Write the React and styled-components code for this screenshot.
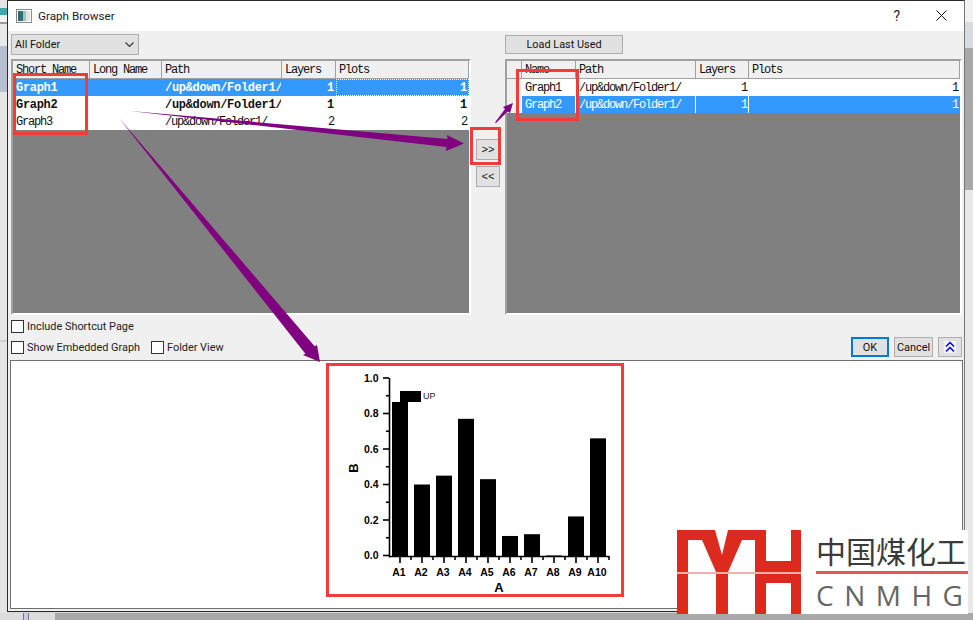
import React from 'react';
import styled, { createGlobalStyle } from 'styled-components';

const GlobalStyle = createGlobalStyle`
  html, body { margin: 0; padding: 0; background: #d8d8d8; }
  * { box-sizing: border-box; }
`;

const Page = styled.div`
  position: relative;
  width: 973px;
  height: 620px;
  overflow: hidden;
  display: flex;
  flex-direction: column;
  font-family: Roboto, "Liberation Sans", sans-serif;
  color: #111;
`;

const Desk = styled.div`
  display: flex;
  height: 613px;
`;

const LeftStrip = styled.div`
  width: 7px;
  background: linear-gradient(
    to bottom,
    #e4e4e4 0 8px, #3fa7a8 8px 15px, #f2f2f2 15px 22px, #9a9a9a 22px 24px,
    #e9e9e9 24px 46px, #b5bfcd 46px 92px, #e6e6e6 92px 340px, #cfcfcf 340px 342px, #e4e4e4 342px
  );
`;

const RightStrip = styled.div`
  flex: 1;
  background: linear-gradient(
    to bottom,
    #f2f2f2 0 22px, #d9dde2 22px 48px, #a8a8a8 48px 190px, #e8e8e8 190px
  );
`;

const BottomStrip = styled.div`
  flex: 1;
  display: flex;
  background: #a9a9a9;
`;

const BottomLeft = styled.div`
  width: 55px;
  padding-left: 23px;
  background: #dcdcdc;
`;

const Splitter = styled.div`
  width: 6px;
  height: 100%;
  background: #c8c8e6;
  border-left: 1px solid #777;
  border-right: 1px solid #777;
`;

const Window = styled.div`
  width: 958px;
  height: 612px;
  display: flex;
  flex-direction: column;
  background: #f0f0f0;
  border: 1px solid #2a2a2a;
  border-right-color: #777;
`;

const TitleBar = styled.div`
  height: 30px;
  flex: none;
  display: flex;
  align-items: center;
  padding: 0 17px 1px 8px;
  background: #fff;
  font-size: 11.7px;
`;

const TitleText = styled.span`
  margin-left: 6px;
  flex: 1;
  color: #222;
`;

const HelpMark = styled.span`
  font-size: 14px;
  margin-right: 36px;
  color: #222;
`;

const Client = styled.div`
  flex: 1;
  display: flex;
  flex-direction: column;
  padding: 3px 2px 2px 3px;
`;

const TopRow = styled.div`
  display: grid;
  grid-template-columns: 460px 34px 1fr;
  height: 281px;
  flex: none;
`;

const Column = styled.div`
  display: flex;
  flex-direction: column;
`;

const Select = styled.div`
  width: 128px;
  height: 21px;
  margin-bottom: 4px;
  padding: 0 4px 0 3px;
  display: flex;
  align-items: center;
  justify-content: space-between;
  background: #e1e1e1;
  border: 1px solid #adadad;
  font-size: 10.8px;
`;

const Button = styled.div`
  width: ${p => p.$w}px;
  height: ${p => p.$h || 21}px;
  flex: none;
  display: flex;
  align-items: center;
  justify-content: center;
  background: #e1e1e1;
  border: ${p => (p.$focus ? '2px solid #0078d7' : '1px solid #adadad')};
  font-size: 10.9px;
  color: #111;
`;

const LoadButton = styled(Button)`
  margin: 1px 0 5px;
`;

const Mover = styled.div`
  display: flex;
  flex-direction: column;
  align-items: center;
  gap: 6px;
  padding-top: 105px;
`;

const MoverButton = styled(Button)`
  font-family: "Liberation Mono", monospace;
  font-size: 11px;
`;

const Panel = styled.div`
  height: 256px;
  display: flex;
  flex-direction: column;
  background: #808080;
  border: 2px solid;
  border-color: #a0a0a0 #fff #fff #a0a0a0;
  font-family: "Liberation Mono", "DejaVu Sans Mono", monospace;
  font-size: 12px;
`;

const Row = styled.div`
  display: grid;
  grid-template-columns: ${p => p.$cols};
  height: ${p => (p.$head ? 18 : 17)}px;
  background: ${p => (p.$selected ? '#3399ff' : p.$head ? '#f0f0f0' : '#fff')};
  color: ${p => (p.$selected ? '#fff' : '#111')};
  font-weight: ${p => (p.$bold ? 700 : 400)};
  letter-spacing: ${p => (p.$bold ? '-0.3px' : '-1.2px')};
`;

const Cell = styled.div`
  display: flex;
  align-items: center;
  overflow: hidden;
  white-space: nowrap;
  padding: 0 ${p => (p.$num ? 1 : 2)}px 0 ${p => (p.$num ? 2 : 3)}px;
  justify-content: ${p => (p.$num ? 'flex-end' : 'flex-start')};
  border-right: 1px solid ${p => (p.$head ? '#a0a0a0' : p.$divider ? '#fff' : 'transparent')};
  border-bottom: ${p => (p.$head ? '1px solid #a0a0a0' : 'none')};
  outline: ${p => (p.$focus ? '1px dotted #fff' : 'none')};
  outline-offset: -1px;
  background: ${p => (p.$gutter ? '#f0f0f0' : 'transparent')};
`;

const Options = styled.div`
  flex: 1;
  display: flex;
  flex-direction: column;
  gap: 4px;
  padding-top: 4px;
`;

const OptionRow = styled.div`
  display: flex;
  align-items: center;
  height: 14px;
  gap: 11px;
`;

const WideRow = styled(OptionRow)`
  height: 20px;
`;

const CheckLabel = styled.label`
  display: flex;
  align-items: center;
  gap: 3px;
  font-size: 10.9px;
  color: #222;
  white-space: nowrap;
`;

const Box = styled.span`
  width: 13px;
  height: 13px;
  flex: none;
  background: #fff;
  border: 1px solid #333;
`;

const Actions = styled.div`
  margin-left: auto;
  display: flex;
  gap: 5px;
`;

const Preview = styled.div`
  height: 249px;
  flex: none;
  margin: 0 -1px;
  padding: 3px 0 0 316px;
  background: #fff;
  border: 1px solid #6e6e6e;
`;

const RedBox = styled.div`
  position: absolute;
  left: ${p => p.$x}px;
  top: ${p => p.$y}px;
  width: ${p => p.$w}px;
  height: ${p => p.$h}px;
  border: 3px solid #f43b3b;
`;

const ArrowLayer = styled.svg`
  position: absolute;
  left: 0;
  top: 0;
`;

const Logo = styled.div`
  position: absolute;
  left: 677px;
  top: 530px;
  width: 291px;
  height: 84px;
  display: flex;
  background: #fff;
`;

const LogoText = styled.div`
  margin-left: 15px;
  width: 152px;
  flex: none;
  display: flex;
  flex-direction: column;
`;

const LogoCn = styled.div`
  height: 41px;
  font-family: "Noto Sans CJK SC", sans-serif;
  font-size: 30px;
  line-height: 41px;
  color: #3a3a3a;
  white-space: nowrap;
`;

const LogoRule = styled.div`
  height: 3px;
  background: #e8554d;
`;

const LogoEn = styled.div`
  margin-top: 3px;
  font-family: "Open Sans", sans-serif;
  font-size: 28px;
  line-height: 36px;
  letter-spacing: 10.5px;
  color: #666;
  white-space: nowrap;
`;

const LogoLast = styled.span`
  letter-spacing: 0;
`;

const LEFT_COLS = '77px 72px 120px 54px 1fr';
const RIGHT_COLS = '15px 54px 120px 53px 1fr';

const leftRows = [
  { name: 'Graph1', layers: 1, plots: 1, bold: true, selected: true },
  { name: 'Graph2', layers: 1, plots: 1, bold: true },
  { name: 'Graph3', layers: 2, plots: 2 },
];

const rightRows = [
  { name: 'Graph1', selected: false },
  { name: 'Graph2', selected: true },
];

const bars = [0.865, 0.4, 0.45, 0.77, 0.43, 0.11, 0.12, 0, 0.22, 0.66];

// chart coordinates are local to the red frame
const Chart = () => {
  const yOf = v => 191.5 - 177.5 * v;
  const labelFont = '"Liberation Sans", sans-serif';
  return (
    <svg width="296" height="240" viewBox="0 0 296 240" style={{ display: 'block' }}>
      {bars.map((v, i) => (
        <rect key={i} x={65 + i * 22} y={yOf(v)} width="16" height={192 - yOf(v)} fill="#000" />
      ))}
      <rect x="73" y="27" width="21" height="11" fill="#000" />
      <text x="96" y="35" fontSize="9" fontFamily={labelFont} fill="#222">UP</text>
      <path d="M62.5 14V193.5M62 192.5H282" stroke="#000" strokeWidth="1.6" fill="none" />
      {[0, 0.2, 0.4, 0.6, 0.8, 1].map(v => (
        <g key={v}>
          <line x1="56" x2="62" y1={yOf(v)} y2={yOf(v)} stroke="#000" strokeWidth="1.6" />
          <text x="51.5" y={yOf(v) + 3.5} textAnchor="end" fontSize="10.5" fontWeight="700" fontFamily={labelFont}>
            {v.toFixed(1)}
          </text>
        </g>
      ))}
      {[0.1, 0.3, 0.5, 0.7, 0.9].map(v => (
        <line key={v} x1="59" x2="62" y1={yOf(v)} y2={yOf(v)} stroke="#000" strokeWidth="1.6" />
      ))}
      {bars.map((_, i) => (
        <g key={i}>
          <line x1={73 + i * 22} x2={73 + i * 22} y1="192" y2="199" stroke="#000" strokeWidth="1.6" />
          <line x1={84 + i * 22} x2={84 + i * 22} y1="192" y2="196" stroke="#000" strokeWidth="1.6" />
          <text x={72 + i * 22} y="212" textAnchor="middle" fontSize="10.5" fontWeight="700" fontFamily={labelFont}>
            {`A${i + 1}`}
          </text>
        </g>
      ))}
      <text x="172" y="227.5" textAnchor="middle" fontSize="13" fontWeight="700" fontFamily={labelFont}>A</text>
      <text
        transform="translate(31 104) rotate(-90)"
        textAnchor="middle"
        fontSize="13"
        fontWeight="700"
        fontFamily={labelFont}
      >
        B
      </text>
    </svg>
  );
};

const WindowIcon = () => (
  <svg width="16" height="14" viewBox="0 0 16 14">
    <rect x="0.5" y="0.5" width="15" height="13" fill="#fff" stroke="#8a8a8a" />
    <rect x="2" y="2" width="5" height="10" fill="#2f6f78" />
    <rect x="7" y="2" width="3" height="10" fill="#9cc7c4" />
    <rect x="10" y="2" width="4" height="10" fill="#e4e4e4" />
  </svg>
);

const CloseIcon = () => (
  <svg width="11" height="11" viewBox="0 0 11 11">
    <path d="M0.5 0.5L10.5 10.5M10.5 0.5L0.5 10.5" stroke="#111" strokeWidth="1" fill="none" />
  </svg>
);

const ChevronDown = () => (
  <svg width="9" height="6" viewBox="0 0 9 6">
    <path d="M0.5 0.5L4.5 4.5L8.5 0.5" stroke="#333" strokeWidth="1.1" fill="none" />
  </svg>
);

const DoubleUp = () => (
  <svg width="12" height="12" viewBox="0 0 12 12" style={{ background: '#f3f3ff' }}>
    <path d="M2 5.5L6 1.5L10 5.5M2 10.5L6 6.5L10 10.5" stroke="#0000ee" strokeWidth="1.5" fill="none" />
  </svg>
);

const Arrows = () => (
  <ArrowLayer width="973" height="620" viewBox="0 0 973 620">
    <g fill="#800080">
      <polygon points="130,111 447.5,139 447,135 464,143.5 446,151 446.5,147" />
      <polygon points="119,118 314.6,346.2 317,345 320,362 303,355 305.4,353.8" />
      <polygon points="495,122.5 505,109 503,107 513,103 510,113 507.5,111.5 496,123" />
    </g>
  </ArrowLayer>
);

const App = () => (
  <Page>
    <GlobalStyle />
    <Desk>
      <LeftStrip />
      <Window>
        <TitleBar>
          <WindowIcon />
          <TitleText>Graph Browser</TitleText>
          <HelpMark>?</HelpMark>
          <CloseIcon />
        </TitleBar>
        <Client>
          <TopRow>
            <Column>
              <Select>
                All Folder
                <ChevronDown />
              </Select>
              <Panel>
                <Row $cols={LEFT_COLS} $head>
                  {['Short Name', 'Long Name', 'Path', 'Layers', 'Plots'].map(h => (
                    <Cell key={h} $head>{h}</Cell>
                  ))}
                </Row>
                {leftRows.map(r => (
                  <Row key={r.name} $cols={LEFT_COLS} $bold={r.bold} $selected={r.selected}>
                    <Cell>{r.name}</Cell>
                    <Cell />
                    <Cell>/up&amp;down/Folder1/</Cell>
                    <Cell $num>{r.layers}</Cell>
                    <Cell $num $focus={r.selected}>{r.plots}</Cell>
                  </Row>
                ))}
              </Panel>
            </Column>
            <Mover>
              <MoverButton $w={24}>&gt;&gt;</MoverButton>
              <MoverButton $w={24}>&lt;&lt;</MoverButton>
            </Mover>
            <Column>
              <LoadButton $w={118} $h={19}>Load Last Used</LoadButton>
              <Panel>
                <Row $cols={RIGHT_COLS} $head>
                  {['', 'Name', 'Path', 'Layers', 'Plots'].map(h => (
                    <Cell key={h} $head>{h}</Cell>
                  ))}
                </Row>
                {rightRows.map(r => (
                  <Row key={r.name} $cols={RIGHT_COLS} $selected={r.selected}>
                    <Cell $gutter $divider />
                    <Cell $divider>{r.name}</Cell>
                    <Cell $divider>/up&amp;down/Folder1/</Cell>
                    <Cell $num $divider>1</Cell>
                    <Cell $num>1</Cell>
                  </Row>
                ))}
              </Panel>
            </Column>
          </TopRow>
          <Options>
            <OptionRow>
              <CheckLabel><Box />Include Shortcut Page</CheckLabel>
            </OptionRow>
            <WideRow>
              <CheckLabel><Box />Show Embedded Graph</CheckLabel>
              <CheckLabel><Box />Folder View</CheckLabel>
              <Actions>
                <Button $w={38} $h={20} $focus>OK</Button>
                <Button $w={39} $h={20}>Cancel</Button>
                <Button $w={24} $h={20}><DoubleUp /></Button>
              </Actions>
            </WideRow>
          </Options>
          <Preview>
            <Chart />
          </Preview>
        </Client>
      </Window>
      <RightStrip />
    </Desk>
    <BottomStrip>
      <BottomLeft>
        <Splitter />
      </BottomLeft>
    </BottomStrip>

    <RedBox $x={13} $y={73} $w={75} $h={62} />
    <RedBox $x={516} $y={69} $w={63} $h={52} />
    <RedBox $x={470} $y={127} $w={31} $h={38} />
    <RedBox $x={326} $y={363} $w={298} $h={234} />
    <Arrows />

    <Logo>
      <svg width="124" height="84" viewBox="0 0 124 84" style={{ flex: 'none' }}>
        <rect width="124" height="84" fill="#dc2a1f" />
        <g fill="#fff">
          <polygon points="11,10 25,10 39,42 11,42" />
          <polygon points="38,0 51,0 45,25" />
          <polygon points="65,10 78,10 78,42 51,42" />
          <rect x="89" y="0" width="25" height="31" />
          <rect x="11" y="44" width="28" height="40" />
          <rect x="51" y="44" width="27" height="40" />
          <rect x="89" y="53" width="25" height="31" />
        </g>
        <rect y="42" width="124" height="2" fill="#f3b0ab" />
      </svg>
      <LogoText>
        <LogoCn>中国煤化工</LogoCn>
        <LogoRule />
        <LogoEn>CNMH<LogoLast>G</LogoLast></LogoEn>
      </LogoText>
    </Logo>
  </Page>
);

export default App;
